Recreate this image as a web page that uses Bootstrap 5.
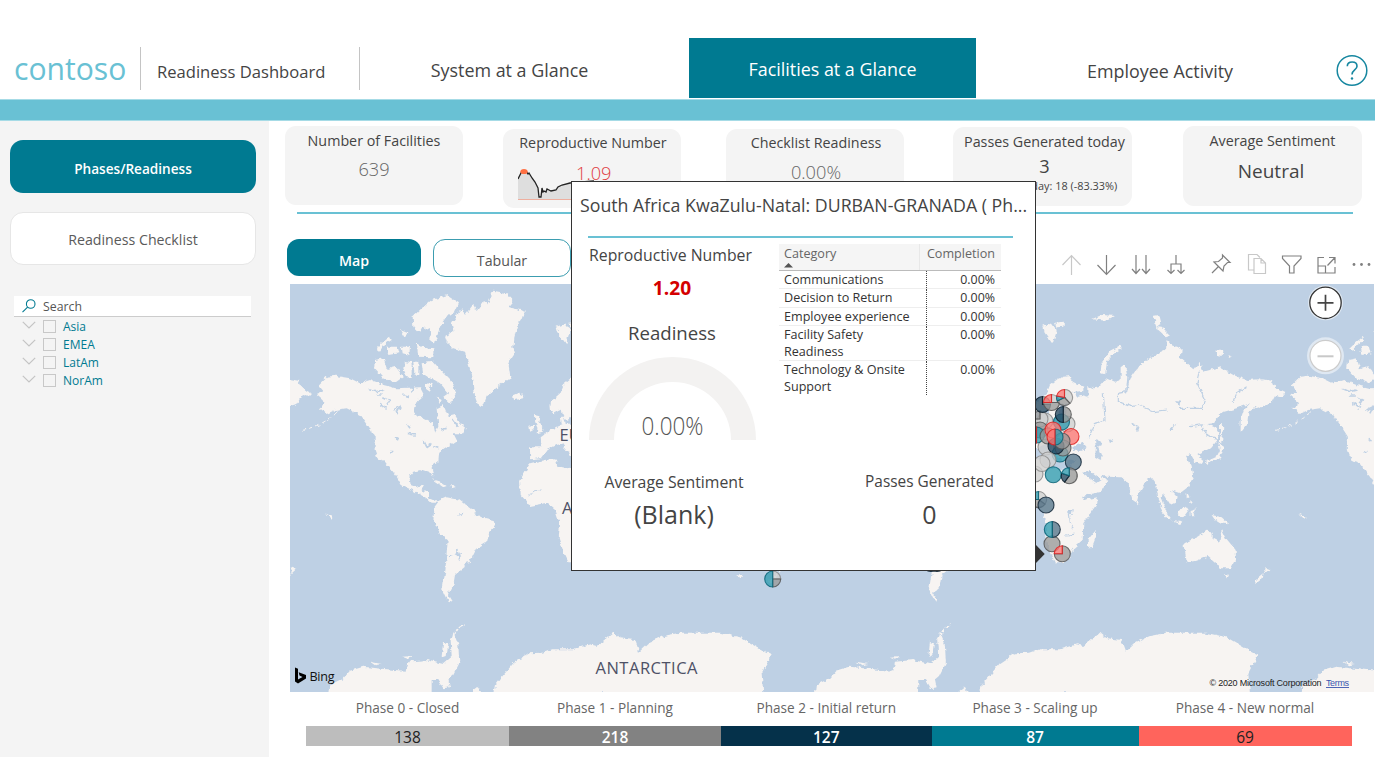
<!DOCTYPE html>
<html lang="en">
<head>
<meta charset="utf-8">
<meta name="viewport" content="width=device-width, initial-scale=1">
<title>Readiness Dashboard</title>
<link href="https://cdn.jsdelivr.net/npm/bootstrap@5.3.0/dist/css/bootstrap.min.css" rel="stylesheet">
<style>
:root{--teal:#007a91;--sky:#69c1d4;--ink:#444;--panel:#f4f4f4}
body{font-family:"Open Sans","Noto Sans",sans-serif;color:var(--ink);width:1375px;height:757px;overflow:hidden;background:#fff;line-height:1.25}
.top{height:99px;padding-top:38px}
.top>*{height:60px}
.brand{width:141px;padding-left:14px;font-size:30.1px;line-height:61px;color:var(--sky)}
.vline{width:1px;height:43px;background:#c4c4c4;margin-top:9px}
.app-title{width:219px;padding:8px 0 0 16px;font-size:16.6px}
.tab{font-size:17.9px}
.tab.on{background:var(--teal);color:#fff;font-weight:500}
.band{height:22px;background:var(--sky);border-top:1px solid #a6dbe6;border-bottom:1px solid #a6dbe6}
.side{width:269px;background:var(--panel);padding:19px 10px 0}
.pill{height:53px;border-radius:13px;width:246px;font-size:13.6px;padding-top:3px}
.pill.on,.view.on{background:var(--teal);color:#fff;font-weight:600}
.pill.off{background:#fff;border:1px solid #e6e6e6;margin-top:19px;color:#5a5a5a;font-size:14.2px}
.search{width:237px;height:21px;margin:31px 0 0 4px;background:#fff;border-bottom:1px solid #ccc;font-size:12.3px;color:#555;padding-left:8px}
.tree{font-size:12px;color:var(--teal);padding-left:12px}
.tree>div{height:18px}
.tick{width:13px;height:13px;border:1px solid #c8c8c8;margin:0 7px 0 7px}
.kpis{height:91px;padding-left:16px}
.kpi{width:178px;height:79px;border-radius:11px;background:var(--panel);font-size:14.3px;line-height:20px}
.kpi .val{font-size:18.2px;line-height:24px;color:#666;font-weight:300}
.rule{height:2px;background:var(--sky)}
.views{height:70px;padding:25px 0 0 18px}
.view{width:134px;height:37px;border-radius:12px;font-size:14.2px;padding-top:6px}
.view.off{border:1px solid #3c9db0;width:138px;margin-left:12px;color:#555;height:38px}
.map{width:1084px;height:408px;margin-left:21px;display:block;background:#bed0e4}
.phase{font-size:13.6px;line-height:20px;color:#666;padding-top:6px}
.phase .n{height:20px;font-size:15.5px;line-height:22px;margin-top:8px}
.tip{position:absolute;left:571px;top:181px;width:465px;height:390px;background:#fff;border:1px solid #333;padding-top:13px}
.tip-title{font-size:17.75px;line-height:20px;padding-left:8px;white-space:nowrap}
.tip .lbl{font-size:15.8px;line-height:20px}
.cat{width:222px;font-size:12.6px;line-height:17px;color:#333;margin-left:23px;border-collapse:collapse;margin-top:6px;height:0}
.cat td,.cat th{padding:0 6px 0 5px;vertical-align:top;font-weight:400}
.cat th{background:#f5f5f5;color:#666;height:26px;border-bottom:1px solid #bbb;padding-top:1px}
.cat td{border-bottom:1px solid #eee}
.cat tr:last-child td{border-bottom:0}
.cat td+td{text-align:right;font-size:12.4px;position:relative}
.cat td+td::before{content:"";position:absolute;left:7px;top:0;bottom:0;border-left:1px dotted #444}
.arrow{position:absolute;left:464px;top:363px}
</style>
</head>
<body class="d-flex flex-column position-relative">

<header class="top d-flex flex-shrink-0">
  <div class="brand">contoso</div>
  <div class="vline" style="margin-left:-1px"></div>
  <div class="app-title d-flex align-items-center">Readiness Dashboard</div>
  <div class="vline" style="margin-left:-1px"></div>
  <div class="tab d-flex align-items-center justify-content-center" style="width:299px;padding-top:5px">System at a Glance</div>
  <div class="tab on d-flex align-items-center justify-content-center ms-auto" style="width:287px;padding-top:3px">Facilities at a Glance</div>
  <div class="tab d-flex align-items-center justify-content-center" style="width:368px;margin-right:31px;padding-top:7px">Employee Activity</div>
</header>
<div class="band flex-shrink-0"></div>

<div class="d-flex flex-grow-1">
  <aside class="side flex-shrink-0">
    <div class="pill on d-flex align-items-center justify-content-center">Phases/Readiness</div>
    <div class="pill off d-flex align-items-center justify-content-center">Readiness Checklist</div>
    <div class="search d-flex align-items-center">
      <svg width="14" height="14" viewBox="0 0 14 14" fill="none" stroke="#007a91" stroke-width="1.1"><circle cx="8.7" cy="5" r="4.3"/><path d="M5.6 8.1L.5 13.2"/></svg>
      <span style="margin-left:7px;padding-top:1px">Search</span>
    </div>
    <div class="tree" id="tree"></div>
  </aside>

  <main class="flex-grow-1">
    <div class="kpis d-flex text-center">
      <div class="kpi" style="margin-top:5px;padding-top:5px">Number of Facilities<div class="val" style="padding-top:6px">639</div></div>
      <div class="kpi" style="margin:8px 0 0 40px;padding:4px 0 0 2px">Reproductive Number
        <div class="d-flex"><svg width="76" height="40" viewBox="0 0 76 40" style="margin:9px 0 0 13px" class="flex-shrink-0">
          <path d="M0 16L2 12L4 9L8 9L11 12L14 16L17 20L20 27L22 36L23 34L24 26L26 29L29 27L32 28L36 28L40 24L44 23L52 21L76 19V37H0Z" fill="#dedede"/>
          <path d="M0 17L2 13L4 9L8 9L10 12L11 11L14 16L17 20L18 22L20 26L21 35L23 35L24 26L25 30L26 29L28 30L29 27L31 28L33 29L38 28L40 25L44 23L52 21L76 19" fill="none" stroke="#222" stroke-width="1.3"/>
          <path d="M0 37.5H76" stroke="#eeaf9f" stroke-width="1.2"/><ellipse cx="6" cy="9.5" rx="3.6" ry="2.6" fill="#ff7043"/></svg>
          <div class="val" style="color:#e03a3e;margin-left:-18px;padding-top:8px">1.09</div></div>
      </div>
      <div class="kpi" style="margin:8px 0 0 45px;padding-top:4px;padding-left:2px">Checklist Readiness<div class="val" style="padding-top:7px">0.00%</div></div>
      <div class="kpi" style="margin:6px 0 0 49px;padding:5px 0 0 4px;width:179px">Passes Generated today<div class="val" style="color:#444;font-weight:400;padding-top:3px;line-height:22px">3</div><div style="font-size:10.9px;line-height:18px;padding-left:13px;white-space:nowrap">Previous day: 18 (-83.33%)</div></div>
      <div class="kpi" style="margin:5px 0 0 51px;padding-top:5px;height:80px;width:179px">Average Sentiment<div class="val" style="color:#444;font-weight:400;font-size:19px;padding-top:8px;padding-right:3px">Neutral</div></div>
    </div>
    <div class="rule" style="width:1056px;margin-left:28px"></div>
    <div class="views d-flex">
      <div class="view on d-flex align-items-center justify-content-center">Map</div>
      <div class="view off d-flex align-items-center justify-content-center">Tabular</div>
      <svg class="ms-auto" width="312" height="24" viewBox="1060 252 312 24" fill="none" stroke="#808080" stroke-width="1.2" style="margin:13px 3px 0 0">
        <path stroke="#c8c8c8" d="M1071.5 275V256M1062.5 265L1071.5 255.5L1080.5 265"/>
        <path d="M1106.500 255V274M1097.500 265L1106.500 274.500L1115.500 265"/>
        <path d="M1136 255V273.500M1132 269L1136 273.500L1140 269M1146 255V273.500M1142 269L1146 273.500L1150 269"/>
        <path d="M1176 255V264M1171 273.500V264H1181V273.500M1167.500 270L1171 273.500L1174.500 270M1177.500 270L1181 273.500L1184.500 270"/>
        <path d="M1212 273L1218.500 266.500M1214 262L1223 271L1224 266L1227.500 262.500H1230L1222.500 255V258L1218.500 261.500Z"/>
        <path stroke="#c8c8c8" d="M1254 270H1248.500V254.500H1257L1260 257.500M1254 258.500H1261L1265.500 263V273.500H1254ZM1261 258.500V263H1265.500"/>
        <path d="M1282.500 256H1301V258.500L1294 266V273L1289.500 273V266L1282.500 258.500Z"/>
        <path d="M1324 257.500H1318V273H1335V267M1318 266H1325.500V273M1327.500 265.500L1335 257.500M1329 257.500H1335V263.500"/>
        <g fill="#808080" stroke="none"><circle cx="1354" cy="264.500" r="1.400"/><circle cx="1361.500" cy="264.500" r="1.400"/><circle cx="1369" cy="264.500" r="1.400"/></g>
      </svg>
    </div>

    <svg class="map" viewBox="290 284 1084 408">
      <defs>
        <filter id="coast" x="-5%" y="-5%" width="110%" height="110%"><feTurbulence type="fractalNoise" baseFrequency=".22" numOctaves="2" seed="4"/><feDisplacementMap in="SourceGraphic" scale="5" xChannelSelector="R" yChannelSelector="G"/></filter>
        <g id="world">
          <!-- Americas, Greenland, Antarctica -->
          <g transform="translate(280 280) scale(.33333)">
            <path d="M115 315L140 290L165 287L210 295L240 310L270 300L310 315L350 325L420 322L432 345L410 365L402 385L410 405L440 420L460 430L465 458L475 440L470 385L490 375L505 410L525 405L540 430L557 445L550 460L520 460L530 480L500 500L478 515L475 545L455 560L460 590L450 575L430 568L400 575L388 590L392 615L410 622L432 612L425 632L447 637L447 655L470 665L500 652L540 660L580 690L590 708L640 720L645 735L628 755L622 785L590 805L570 845L552 850L555 860L525 885L520 915L512 930L500 940L516 965L500 958L487 930L495 880L498 850L503 780L480 760L460 720L463 685L475 668L455 668L440 655L400 632L365 615L350 590L315 545L295 540L284 510L284 470L265 440L240 405L200 385L165 390L140 402L120 385L138 370L110 345L132 335Z"/>
            <path d="M495 170L520 155L515 130L545 85L555 105L580 72L590 90L612 60L625 70L640 32L680 40L697 60L688 82L720 90L738 95L715 130L705 160L700 200L705 220L685 250L692 295L660 315L630 340L620 350L608 382L595 378L585 350L580 300L565 250L555 215L520 205L500 185Z"/>
            <path d="M398 110L425 85L455 60L500 46L537 70L525 95L500 112L480 140L465 190L448 185L450 150L430 140L420 160L400 140Z"/>
            <path d="M285 240L310 235L320 265L345 258L370 290L345 308L305 290L282 265ZM290 205L310 185L330 170L335 180L312 195L300 212ZM320 200L350 200L355 220L325 225ZM365 200L390 200L388 225L368 220ZM410 185L425 200L460 205L460 232L415 230ZM425 250L460 245L490 280L510 300L530 335L512 372L490 350L505 340L480 310L450 292L430 285ZM375 245L395 250L395 295L380 290L370 265ZM400 245L415 245L415 285L403 280ZM435 310L458 312L450 335L435 325ZM360 150L385 160L375 175ZM470 352L485 360L480 370ZM700 345L715 338L730 345L720 358L702 360ZM455 598L480 605L500 618L490 622ZM510 612L530 620L515 625Z"/>
            <path d="M30 298L55 302L62 318L80 332L95 340L85 350L70 345L52 345L48 372L30 378Z"/>
            <path d="M170 398L150 415L125 430L100 442L65 452" fill="none" stroke="#f7f4f2" stroke-width="3" stroke-dasharray="12 9"/>
            <path d="M520 1070L522 1060L535 1045L553 1035" fill="none" stroke="#f7f4f2" stroke-width="5" stroke-dasharray="12 4"/>
            <path d="M145 1240L148 1215L190 1195L210 1172L250 1160L340 1170L380 1172L385 1145L440 1140L490 1152L515 1130L512 1080L522 1062L535 1095L538 1150L520 1185L505 1198L510 1222L490 1225L475 1200L455 1200L455 1240ZM570 1240L595 1220L605 1240ZM490 1085L505 1090L500 1125L485 1130ZM270 1145L305 1152L285 1156ZM370 1130L400 1128L385 1136Z"/>
            <path d="M640 1240L645 1215L700 1150L745 1120L790 1118L820 1108L880 1108L930 1093L950 1098L1000 1058L1020 1075L1065 1080L1078 1115L1110 1085L1150 1068L1200 1058L1320 1058L1380 1072L1445 1110L1475 1125L1455 1160L1445 1180L1450 1240Z"/>
          </g>
          <!-- Europe, Africa, Asia, Oceania -->
          <g transform="translate(533.4 280) scale(.33333)">
            <path d="M48 375L55 362L80 340L90 315L113 297L130 290L152 288L158 305L190 320L190 333L160 335L170 350L185 345L205 350L205 318L220 325L240 318L260 295L285 305L302 300L302 262L315 252L322 290L318 335L328 300L345 275L365 250L380 240L410 222L438 210L440 180L455 195L485 205L482 235L505 255L520 268L538 245L550 275L600 262L640 285L680 300L720 298L760 315L790 345L765 345L752 370L705 385L685 400L682 430L662 455L662 420L672 390L690 370L650 385L602 398L582 430L562 432L590 445L598 470L570 505L545 518L532 525L550 540L542 552L525 545L512 522L498 528L515 560L520 590L505 620L480 640L452 630L470 650L465 668L450 675L428 640L425 655L440 695L430 690L415 655L408 610L395 592L380 602L357 640L350 668L338 660L322 608L305 592L262 590L250 580L240 590L265 602L245 635L185 648L160 590L150 570L192 660L232 652L232 670L190 730L188 780L160 805L150 835L130 847L105 847L90 815L76 772L80 735L65 690L40 668L-10 678L-38 645L-40 600L-10 550L30 540L66 538L72 558L113 568L145 565L165 540L135 545L120 535L108 520L92 512L95 495L110 520L90 490L70 495L40 510L22 535L-10 538L-10 502L25 502L22 472L45 455L72 440L85 435L82 410L92 410L97 432L130 430L150 415L135 405L140 370L122 375L115 405L100 420L88 405L85 388L62 400L50 395Z"/>
            <path d="M5 405L18 408L15 425L30 445L28 455L10 460L12 440L5 425ZM-12 438L2 432L0 450L-10 455ZM70 140L95 130L110 150L98 192L75 160ZM105 128L132 125L130 140L110 142ZM302 195L270 212L245 248L242 280L255 283L262 243L285 218L305 205ZM398 108L418 105L424 130L410 140ZM408 138L425 140L450 165L440 172L415 150ZM215 118L245 105L285 108L260 122ZM585 212L610 212L608 228L590 225ZM622 222L636 228L628 232ZM600 425L610 440L605 475L600 460ZM595 490L612 500L600 535L560 552L558 545L590 530L600 510ZM600 470L610 482L600 490ZM205 805L203 780L228 750L228 770L215 804Z"/>
            <path d="M490 790L525 775L560 752L578 755L578 775L598 785L605 748L618 775L647 810L648 838L633 865L600 865L588 848L565 828L530 842L500 848L497 825ZM612 882L627 884L622 897ZM732 862L748 868L735 880ZM732 880L728 895L706 912L705 902ZM575 705L605 712L628 733L600 730L585 720ZM472 695L498 678L506 690L490 712L475 705ZM415 675L430 685L455 718L445 718L425 695ZM455 722L487 727L480 732ZM512 690L530 685L518 700L520 710L512 708ZM500 635L508 650L500 655ZM512 660L520 672L510 668ZM350 662L356 668L352 673ZM835 700L860 712L852 716Z"/>
            <g fill="#bed0e4"><path d="M225 480L245 485L235 505L245 530L242 540L225 530L228 505ZM160 500L185 485L200 505L185 512L162 512ZM265 475L280 480L270 490ZM465 360L482 362L478 376ZM448 450L470 430L458 450ZM145 690L158 690L155 705L145 705ZM190 580L230 610L245 600L205 570Z"/>
            </g>
            <g fill="none" stroke="#bed0e4" stroke-width="3.500"><path d="M325 310L320 335L295 340L295 365L335 380L355 375L400 395L440 390M538 275L530 310L555 360L545 385L480 385M680 320L650 340L640 365M510 440L545 435L560 465L590 475M250 340L255 420L225 430L205 475M335 430L355 440L350 455M145 700L148 730L160 745M135 765L165 763"/></g>
          </g>
          <g transform="translate(280 280) scale(.33333)" fill="none" stroke="#bed0e4" stroke-width="5">
            <path d="M265 325L290 335L310 330M310 350L330 360L320 375M340 390L360 380L350 400M370 345L390 350M300 370L320 385M380 430L390 445M380 460L405 465M430 480L440 500L455 490M460 500L475 505M480 450L500 445M520 420L535 440M345 475L355 480M330 515L340 515M390 300L400 335M530 810L540 840M535 705L550 700M450 320L465 330M290 345L305 345"/>
            <path d="M510 830L545 820M748 645L765 632L785 630" stroke-width="3"/>
          </g>
        </g>
      </defs>
      <g fill="#f7f4f2" filter="url(#coast)">
        <use href="#world" x="-486.600"/><use href="#world"/><use href="#world" x="486.600"/><use href="#world" x="973.200"/>
      </g>
      <g fill="#4e5166" font-size="16.500" font-family="Open Sans">
        <text x="559.500" y="441">EUROPE</text><text x="562" y="514">AFRICA</text><text x="595.500" y="674" textLength="102">ANTARCTICA</text>
      </g>
      <g id="pies" stroke-width="1.100"></g>
      <path d="M295 667.500L298 668.700V679.500L302.500 677L299.500 675.500L298.700 672.300L306 675V678.500L298 683.500L295 681.500Z" fill="#000"/>
      <text x="309.500" y="680.500" font-size="12.600" fill="#111" textLength="25">Bing</text>
      <text x="1209.500" y="686" font-size="9" fill="#222" textLength="112" font-family="Liberation Sans">© 2020 Microsoft Corporation</text>
      <text x="1326" y="686" font-size="9" fill="#3a55b0" textLength="23" text-decoration="underline" font-family="Liberation Sans">Terms</text>
      <g fill="#fff"><circle cx="1325.500" cy="302.800" r="17.500" opacity=".5"/><circle cx="1325.500" cy="355.800" r="18.500" opacity=".5"/>
        <circle cx="1325.500" cy="302.800" r="15.700" stroke="#333" stroke-width="1.300"/><circle cx="1325.500" cy="355.800" r="15.500" stroke="#ccc" stroke-width="1.200"/></g>
      <path d="M1317.500 302.800H1333.500M1325.500 294.800V310.800" stroke="#444" stroke-width="1.700"/><path d="M1317.500 356.300H1333.500" stroke="#c8c8c8" stroke-width="2"/>
    </svg>

    <div class="d-flex text-center" style="margin-left:37px" id="phases"></div>
  </main>
</div>

<svg class="position-absolute" style="left:1336px;top:54px" width="32" height="33" viewBox="0 0 32 33"><circle cx="16" cy="16.500" r="14.800" fill="none" stroke="#1687a0" stroke-width="1.500"/><path d="M11.300 12.300C11.300 9.500 13.500 8 16.200 8C19 8 21 9.600 21 12.200C21 16 16 16 16 20.500" fill="none" stroke="#1687a0" stroke-width="1.600"/><circle cx="16" cy="24.500" r="1.200" fill="#1687a0"/></svg>

<section class="tip">
  <div class="tip-title">South Africa KwaZulu-Natal: DURBAN-GRANADA ( Ph...</div>
  <div class="rule" style="width:425px;margin:21px 0 0 16px"></div>
  <div class="d-flex">
    <div class="text-center" style="width:168px;margin-left:16px">
      <div class="lbl text-nowrap" style="padding-top:7px;margin-left:-3px">Reproductive Number</div>
      <div class="fw-bold" style="font-size:19.2px;line-height:26px;color:#d40000;padding-top:10px">1.20</div>
      <div style="font-size:18.6px;line-height:24px;padding-top:20px">Readiness</div>
      <svg width="168" height="92" viewBox="0 0 168 92" class="d-block" style="margin:12px 0 0 1px"><path d="M0 83A83.500 83 0 0 1 167 83H142A58.500 58 0 0 0 25 83Z" fill="#f3f2f1"/><text x="52.500" y="77.500" font-size="26.500" font-weight="300" fill="#555" textLength="62" lengthAdjust="spacingAndGlyphs">0.00%</text></svg>
    </div>
    <table class="cat align-self-start">
      <thead><tr><th style="width:140px">Category<svg class="d-block" width="9" height="5" viewBox="0 0 9 5" style="margin-top:1px"><path d="M0 4.500L4.500 0L9 4.500Z" fill="#555"/></svg></th><th class="text-end" style="border-left:1px solid #e8e8e8">Completion</th></tr></thead>
      <tbody>
        <tr style="height:18px"><td>Communications</td><td>0.00%</td></tr>
        <tr style="height:19px"><td>Decision to Return</td><td>0.00%</td></tr>
        <tr style="height:17px"><td>Employee experience</td><td>0.00%</td></tr>
        <tr style="height:35px"><td>Facility Safety Readiness</td><td>0.00%</td></tr>
        <tr style="height:35px"><td>Technology &amp; Onsite Support</td><td>0.00%</td></tr>
      </tbody>
    </table>
  </div>
  <div class="d-flex text-center" style="padding-top:23px">
    <div style="width:204px"><div class="lbl">Average Sentiment</div><div style="font-size:25px;line-height:30px;padding-top:7px">(Blank)</div></div>
    <div style="width:204px;margin-left:51px;padding-left:1px"><div class="lbl" style="font-size:15.400px">Passes Generated</div><div style="font-size:25px;line-height:30px;padding-top:7px">0</div></div>
  </div>
  <svg class="arrow" width="9" height="18" viewBox="0 0 9 18"><path d="M0 0L8.700 9L0 18Z" fill="#333"/></svg>
</section>

<script src="https://cdn.jsdelivr.net/npm/bootstrap@5.3.0/dist/js/bootstrap.bundle.min.js"></script>
<script>
document.getElementById('tree').innerHTML = ['Asia','EMEA','LatAm','NorAm'].map(n =>
  `<div class="d-flex align-items-center"><svg width="14" height="8" viewBox="0 0 14 8" fill="none" stroke="#c4c4c4" stroke-width="1.2" style="margin-top:-2px"><path d="M.8 .8L7 7L13.200 .8"/></svg><span class="tick"></span><span style="padding-top:1px">${n}</span></div>`).join('');

document.getElementById('phases').innerHTML = [
  ['Phase 0 - Closed',138,203,'#bdbdbd','#222',400],
  ['Phase 1 - Planning',218,212,'#828282','#fff',600],
  ['Phase 2 - Initial return',127,210.5,'#05314a','#fff',600],
  ['Phase 3 - Scaling up',87,207,'#007a91','#fff',600],
  ['Phase 4 - New normal',69,213,'#ff645c','#222',400]
].map(([t,n,w,b,c,f]) => `<div class="phase" style="width:${w}px">${t}<div class="n" style="background:${b};color:${c};font-weight:${f}">${n}</div></div>`).join('');

/* Facility pies: centre x, centre y, then [colour, share] slices clockwise from the top */
const K = {n:['#24475f','#0a1c2a'], s:['#54748a','#14283a'], t:['#2f9bb0','#0b6478'], g:['#9a9a9a','#555'], l:['#cfcfcf','#8a8a8a'], r:['#fb7773','#e02020']};
const pies = [
  [1035,474,[['l',1]]],[1045,421,[['l',1]]],[1040,419,[['l',.75],['g',.25]]],[1067,424,[['l',1]]],[1046,447,[['l',1]]],[1040,430,[['g',1]]],
  [1042.500,404.500,[['g',.25],['n',.75]]],[1051.500,402.500,[['l',.25],['g',.5],['r',.25]]],
  [1064.500,397.500,[['l',.38],['g',.3],['t',.1],['r',.22]]],
  [1061.500,422,[['t',1]]],[1063.300,414.500,[['g',.5],['n',.5]]],
  [1036.500,435,[['t',.5],['r',.5]]],[1048,436,[['g',1]]],[1053,430,[['r',1]]],[1071,436.500,[['r',1]]],
  [1060,454,[['t',1]]],[1063,448,[['g',1]]],[1056,446,[['n',1]]],[1062,441,[['g',1]]],
  [1055,437,[['t',.5],['r',.5]]],
  [1048,460,[['l',1]]],[1042,463.500,[['l',1]]],
  [1073.300,462,[['s',1]]],[1053.300,474.700,[['t',1]]],[1069.300,475.700,[['g',.6],['n',.2],['t',.2]]],
  [1038.500,499.500,[['l',.35],['g',.4],['t',.25]]],[1046,505,[['s',1]]],
  [1052,543.700,[['g',1]]],[1052.300,529.500,[['s',.5],['t',.5]]],
  [1062.300,553.700,[['g',.75],['r',.25]]],
  [772.700,579,[['l',.25],['g',.25],['t',.5]]],[931,563.500,[['n',1]]],[937,563.500,[['n',1]]]
];
document.getElementById('pies').innerHTML = pies.map(([x,y,sl]) => {
  const r = 8; let a = 0;
  return sl.map(([k,f]) => {
    const [c,s] = K[k], at = `fill="${c}" stroke="${s}" fill-opacity=".78" stroke-opacity=".85"`;
    if (f === 1) return `<circle cx="${x}" cy="${y}" r="${r}" ${at}/>`;
    const p = t => `${(x + r*Math.sin(t*2*Math.PI)).toFixed(2)} ${(y - r*Math.cos(t*2*Math.PI)).toFixed(2)}`;
    const d = `M${x} ${y}L${p(a)}A${r} ${r} 0 ${f > .5 ? 1 : 0} 1 ${p(a+f)}Z`; a += f;
    return `<path d="${d}" ${at}/>`;
  }).join('');
}).join('');
</script>
</body>
</html>
